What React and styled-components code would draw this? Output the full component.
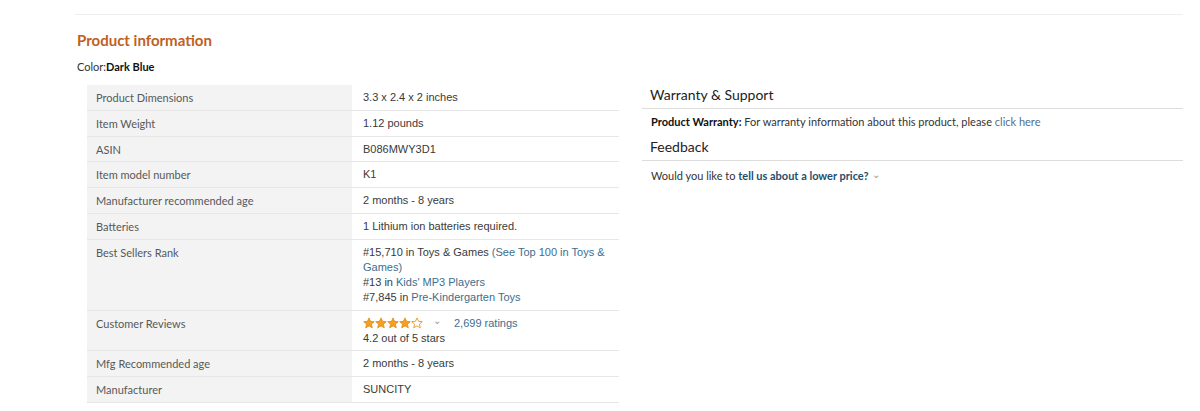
import React from "react";
import styled, { createGlobalStyle } from "styled-components";

const GlobalStyle = createGlobalStyle`
  body {
    margin: 0;
    background: #fff;
    font-family: Lato, "Open Sans", sans-serif;
  }
`;

const rows = [
  { label: "Product Dimensions", value: ["3.3 x 2.4 x 2 inches"] },
  { label: "Item Weight", value: ["1.12 pounds"] },
  { label: "ASIN", value: ["B086MWY3D1"] },
  { label: "Item model number", value: ["K1"] },
  { label: "Manufacturer recommended age", value: ["2 months - 8 years"] },
  { label: "Batteries", value: ["1 Lithium ion batteries required."] },
  { label: "Best Sellers Rank", rank: true },
  { label: "Customer Reviews", reviews: true },
  { label: "Mfg Recommended age", value: ["2 months - 8 years"] },
  { label: "Manufacturer", value: ["SUNCITY"] },
];

const Star = ({ fill }) => (
  <svg width="12" height="12" viewBox="0 0 24 24">
    <defs>
      <linearGradient id={`g${fill}`}>
        <stop offset={`${fill}%`} stopColor="#f4a024" />
        <stop offset={`${fill}%`} stopColor="#fff" />
      </linearGradient>
    </defs>
    <path
      d="M12 1.8l3.1 6.9 7.4.7-5.6 4.9 1.7 7.3L12 17.8l-6.6 3.8 1.7-7.3L1.5 9.4l7.4-.7z"
      fill={`url(#g${fill})`}
      stroke="#e08a12"
      strokeWidth="1.6"
      strokeLinejoin="round"
    />
  </svg>
);

const App = () => {
  return (
    <Page>
      <GlobalStyle />
      <Divider />
      <Heading>Product information</Heading>
      <ColorLine>
        Color:<b>Dark Blue</b>
      </ColorLine>
      <Columns>
        <Table>
          {rows.map((row) => (
            <Row key={row.label}>
              <Label>{row.label}</Label>
              <Value>
                {row.value && row.value.map((v) => <div key={v}>{v}</div>)}
                {row.rank && (
                  <>
                    <div>
                      #15,710 in Toys &amp; Games{" "}
                      <Link>(See Top 100 in Toys &amp; Games)</Link>
                    </div>
                    <div>
                      #13 in <Link>Kids' MP3 Players</Link>
                    </div>
                    <div>
                      #7,845 in <Link>Pre-Kindergarten Toys</Link>
                    </div>
                  </>
                )}
                {row.reviews && (
                  <>
                    <Rating>
                      <Stars>
                        <Star fill={100} />
                        <Star fill={100} />
                        <Star fill={100} />
                        <Star fill={100} />
                        <Star fill={15} />
                      </Stars>
                      <Caret>⌄</Caret>
                      <Link>2,699 ratings</Link>
                    </Rating>
                    <div>4.2 out of 5 stars</div>
                  </>
                )}
              </Value>
            </Row>
          ))}
        </Table>
        <Side>
          <SideTitle>Warranty &amp; Support</SideTitle>
          <SideText>
            <b>Product Warranty:</b> For warranty information about this product, please{" "}
            <SoftLink>click here</SoftLink>
          </SideText>
          <SideTitle>Feedback</SideTitle>
          <SideText>
            Would you like to <StrongLink>tell us about a lower price?</StrongLink>
            <SmallCaret>⌄</SmallCaret>
          </SideText>
        </Side>
      </Columns>
    </Page>
  );
};

const Page = styled.div`
  width: 1108px;
  padding: 14px 0 0 75px;
`;

const Divider = styled.div`
  height: 1px;
  background: #eeeeee;
`;

const Heading = styled.h2`
  margin: 16px 0 0 2px;
  font-size: 15px;
  line-height: 19px;
  font-weight: 700;
  color: #c0601f;
`;

const ColorLine = styled.div`
  margin: 10px 0 0 2px;
  font-size: 11px;
  line-height: 14px;
  color: #333;
  b {
    color: #111;
    font-weight: 700;
  }
`;

const Columns = styled.div`
  display: flex;
  margin-top: 11px;
`;

const Table = styled.div`
  margin-left: 12px;
  width: 532px;
  display: flex;
  flex-direction: column;
`;

const Row = styled.div`
  display: grid;
  grid-template-columns: 265px 1fr;
  border-bottom: 1px solid #e7e7e7;
`;

const Label = styled.div`
  background: #f3f3f3;
  padding: 5px 9px 4.8px;
  font-size: 11px;
  line-height: 15px;
  color: #565959;
`;

const Value = styled.div`
  padding: 5px 11px 4.8px;
  font-family: "Liberation Sans", Arial, sans-serif;
  font-size: 11px;
  line-height: 15px;
  color: #3a3a3a;
`;

const Link = styled.span`
  color: #3b6e8f;
`;

const Rating = styled.div`
  display: flex;
  align-items: center;
`;

const Stars = styled.span`
  display: flex;
  margin-right: 7px;
`;

const Caret = styled.span`
  color: #999;
  font-size: 10px;
  line-height: 10px;
  margin: -4px 13px 0 3px;
`;

const Side = styled.div`
  margin-left: 23px;
  flex: 1;
  display: flex;
  flex-direction: column;
`;

const SideTitle = styled.div`
  padding: 1px 8px 4px;
  font-size: 14px;
  line-height: 18px;
  color: #222;
  border-bottom: 1px solid #dddddd;
`;

const SideText = styled.div`
  padding: 6px 9px 8px;
  font-size: 11px;
  line-height: 14px;
  color: #333;
  b {
    color: #111;
    font-weight: 700;
  }
`;

const SmallCaret = styled.span`
  display: inline-block;
  color: #999;
  font-size: 10px;
  margin-left: 3px;
  vertical-align: 2px;
`;

const SoftLink = styled.span`
  color: #4f6f8f;
`;

const StrongLink = styled.span`
  color: #1e4f6c;
  font-weight: 700;
`;

export default App;
